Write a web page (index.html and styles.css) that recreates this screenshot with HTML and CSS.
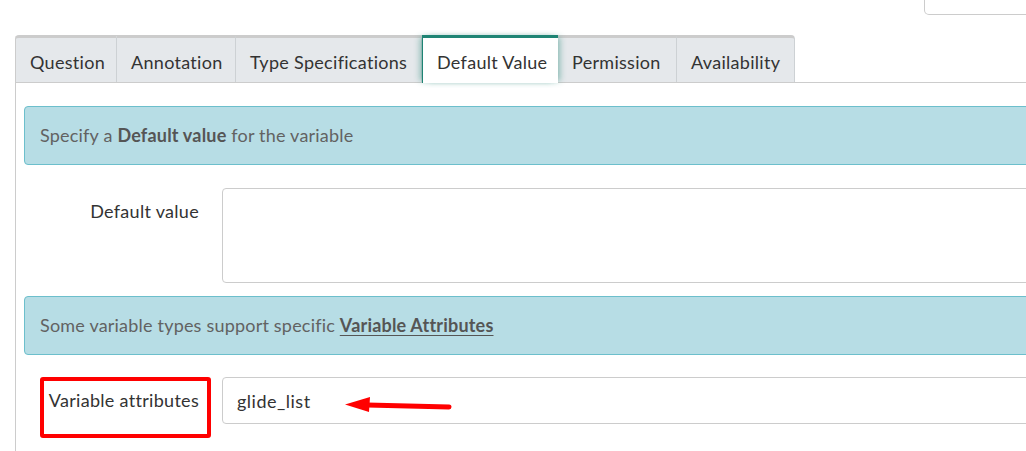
FILE: index.html
```html
<!DOCTYPE html>
<html>
<head>
<meta charset="utf-8">
<link rel="stylesheet" href="styles.css">
</head>
<body>
<div class="page">
  <div class="topbar"><div class="topbox"></div></div>
  <div class="tabs">
    <div class="tab first">Question</div>
    <div class="tab">Annotation</div>
    <div class="tab">Type Specifications</div>
    <div class="tab active">Default Value</div>
    <div class="tab">Permission</div>
    <div class="tab last">Availability</div>
  </div>
  <div class="panel">
    <div class="alert">Specify a <b>Default value</b> for the variable</div>
    <div class="row">
      <label class="label">Default value</label>
      <div class="textarea"></div>
    </div>
    <div class="alert alert2">Some variable types support specific <b><u>Variable Attributes</u></b></div>
    <div class="row row2">
      <label class="label">Variable attributes</label>
      <div class="input">glide_list</div>
    </div>
  </div>
  <div class="highlight"></div>
  <svg class="arrow" width="120" height="24" viewBox="0 0 120 24">
    <path d="M107 13 L25 11" stroke="#ff0000" stroke-width="5" stroke-linecap="round" fill="none"/>
    <path d="M3 10.5 L28 3 L27 18 Z" fill="#ff0000"/>
  </svg>
</div>
</body>
</html>
```
FILE: styles.css
```css
html, body {
  margin: 0;
  padding: 0;
  background: #fff;
  overflow: hidden;
}
body {
  font-family: "Lato", "Source Sans Pro", "Noto Sans", sans-serif;
  font-size: 18px;
  color: #333;
  letter-spacing: 0.3px;
}
.page {
  position: relative;
  width: 1026px;
  height: 451px;
  overflow: hidden;
}
.topbar {
  height: 35px;
  display: flex;
  justify-content: flex-end;
}
.topbox {
  width: 110px;
  height: 14px;
  margin-right: -10px;
  border: 1px solid #ccc;
  border-top: none;
  border-bottom-left-radius: 5px;
}
.tabs {
  display: flex;
  margin-left: 15px;
  height: 47px;
  border-bottom: 1px solid #ccc;
  width: 1100px;
}
.tab {
  box-sizing: border-box;
  height: 47px;
  padding: 13px 14px 0;
  background: #e5e8eb;
  border-top: 3px solid #cccccc;
  border-right: 1px solid #cdd1d4;
  color: #333;
  white-space: nowrap;
}
.tab.first {
  border-left: 1px solid #ccc;
  border-top-left-radius: 4px;
  width: 102px;
}
.tab:nth-child(2) { width: 119px; }
.tab:nth-child(3) { width: 186px; }
.tab.active {
  width: 136px;
  background: #fff;
  border-top: 3px solid #1e8474;
  border-left: 1px solid #1e8474;
  border-right: none;
  height: 48px;
  margin-bottom: -1px;
  position: relative;
  box-shadow: 4px 0 6px -2px rgba(30, 132, 116, 0.45), -4px 0 6px -2px rgba(30, 132, 116, 0.45);
}
.tab:nth-child(5) { width: 119px; }
.tab.last {
  width: 118px;
  border-top-right-radius: 4px;
}
.panel {
  margin-left: 15px;
  border-left: 1px solid #ccc;
  padding: 23px 0 40px 8px;
  width: 1100px;
}
.alert {
  box-sizing: border-box;
  height: 59px;
  background: #b7dde5;
  border: 1px solid #6cbfcc;
  border-radius: 4px;
  padding: 17px 15px 0;
  color: #626262;
  letter-spacing: 0.2px;
}
.alert b {
  font-weight: 700;
  color: #555;
}
.alert u {
  text-underline-offset: 3px;
}
.row {
  display: grid;
  grid-template-columns: 175px 1fr;
  column-gap: 23px;
  margin-top: 23px;
  margin-bottom: 13px;
}
.label {
  text-align: right;
  padding-top: 12px;
  color: #333;
}
.textarea {
  height: 93px;
  border: 1px solid #ccc;
  border-radius: 4px;
}
.row2 {
  margin-top: 22px;
}
.input {
  box-sizing: border-box;
  height: 47px;
  border: 1px solid #ccc;
  border-radius: 4px;
  padding: 12px 14px 0;
  color: #333;
  letter-spacing: 0.5px;
}
.highlight {
  position: absolute;
  left: 40px;
  top: 377px;
  width: 163px;
  height: 53px;
  border: 4px solid #ff0000;
  border-radius: 3px;
}
.arrow {
  position: absolute;
  left: 342px;
  top: 394px;
}
```
